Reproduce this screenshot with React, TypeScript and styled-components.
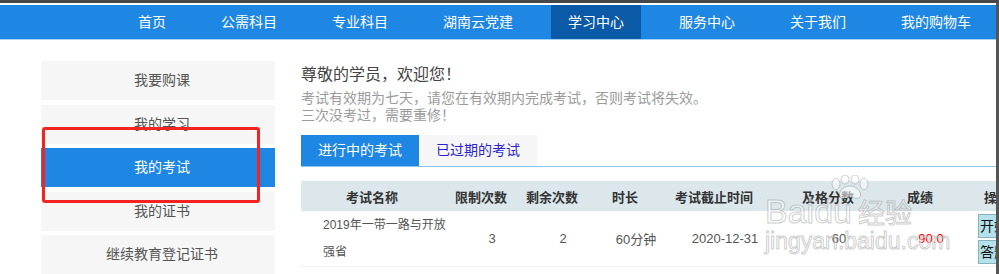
import styled, { createGlobalStyle } from "styled-components";

const GlobalStyle = createGlobalStyle`
  html, body {
    margin: 0;
    padding: 0;
    background: #fff;
  }
  body {
    font-family: "Liberation Sans", "Noto Sans CJK SC", sans-serif;
  }
  * {
    box-sizing: border-box;
  }
`;

const navItems = ["首页", "公需科目", "专业科目", "湖南云党建", "学习中心", "服务中心", "关于我们", "我的购物车"];
const menu = ["我要购课", "我的学习", "我的考试", "我的证书", "继续教育登记证书"];
const heads = ["考试名称", "限制次数", "剩余次数", "时长", "考试截止时间", "及格分数", "成绩", "操作"];

const App = () => {
  return (
    <Frame>
      <GlobalStyle />
      <Nav>
        {navItems.map((item) => (
          <NavItem key={item} active={item === "学习中心"}>
            {item}
          </NavItem>
        ))}
      </Nav>
      <Content>
        <Sidebar>
          {menu.map((item) => (
            <SideItem key={item} active={item === "我的考试"}>
              {item}
            </SideItem>
          ))}
        </Sidebar>
        <Main>
          <Title>尊敬的学员，欢迎您！</Title>
          <Notice>
            考试有效期为七天，请您在有效期内完成考试，否则考试将失效。
            <br />
            三次没考过，需要重修！
          </Notice>
          <Tabs>
            <Tab active>进行中的考试</Tab>
            <Tab>已过期的考试</Tab>
          </Tabs>
          <Table>
            <HeadRow>
              {heads.map((h) => (
                <Cell key={h}>{h}</Cell>
              ))}
            </HeadRow>
            <BodyRow>
              <NameCell>2019年一带一路与开放强省</NameCell>
              <Cell>3</Cell>
              <Cell>2</Cell>
              <Cell>60分钟</Cell>
              <Cell>2020-12-31</Cell>
              <Cell>60</Cell>
              <Cell>
                <Score>90.0</Score>
              </Cell>
              <Actions>
                <ActionButton>开始考试</ActionButton>
                <ActionButton>答题记录</ActionButton>
              </Actions>
            </BodyRow>
          </Table>
        </Main>
      </Content>
      <Highlight />
      <Watermark>
        <Paw viewBox="0 0 46 24">
          <ellipse cx="9" cy="9" rx="4" ry="5.5" />
          <ellipse cx="18" cy="4.5" rx="4" ry="4.5" />
          <ellipse cx="28" cy="4.5" rx="4" ry="4.5" />
          <ellipse cx="37" cy="9" rx="4" ry="5.5" />
          <path d="M23 11 C 15 11, 11 18, 13 22 C 15 25, 20 22, 23 22 C 26 22, 31 25, 33 22 C 35 18, 31 11, 23 11 Z" />
        </Paw>
        <MarkLine>
          <MarkBrand>Baidu</MarkBrand>
          <MarkCn>经验</MarkCn>
        </MarkLine>
        <MarkUrl>jingyan.baidu.com</MarkUrl>
      </Watermark>
    </Frame>
  );
};

const Frame = styled.div`
  position: relative;
  width: 999px;
  height: 274px;
  overflow: hidden;
  border-top: 3px solid #474747;
  border-right: 3px solid #555;
`;

const Nav = styled.nav`
  display: flex;
  gap: 21px;
  height: 35px;
  margin-top: 2px;
  padding-left: 121px;
  background: #1e87e4;
  border-bottom: 1px solid #a5d3f6;
`;

const NavItem = styled.div<{ active?: boolean }>`
  padding: 0 17px;
  height: 34px;
  line-height: 34px;
  font-size: 14px;
  color: #fff;
  white-space: nowrap;
  background: ${(p) => (p.active ? "#0b5aa7" : "transparent")};
`;

const Content = styled.div`
  display: flex;
  gap: 26px;
  padding: 21px 0 0 41px;
`;

const Sidebar = styled.div`
  display: flex;
  flex-direction: column;
  gap: 4.5px;
  width: 234px;
  flex-shrink: 0;
`;

const SideItem = styled.div<{ active?: boolean }>`
  height: 39px;
  line-height: 39px;
  padding-left: 8px;
  text-align: center;
  font-size: 14px;
  color: ${(p) => (p.active ? "#fff" : "#555")};
  background: ${(p) => (p.active ? "#1e87e4" : "#f6f6f6")};
`;

const Main = styled.div`
  flex: 1;
  padding-top: 3px;
  min-width: 0;
`;

const Title = styled.div`
  font-size: 16px;
  line-height: 22px;
  color: #444;
`;

const Notice = styled.div`
  margin-top: 4px;
  font-size: 14px;
  line-height: 17px;
  color: #9b9b9b;
`;

const Tabs = styled.div`
  display: flex;
  margin-top: 11px;
  border-bottom: 1px solid #8fc3ef;
`;

const Tab = styled.div<{ active?: boolean }>`
  width: 118px;
  height: 31px;
  line-height: 31px;
  text-align: center;
  font-size: 14px;
  color: ${(p) => (p.active ? "#fff" : "#2b1fd4")};
  background: ${(p) => (p.active ? "#1e87e4" : "#f6f6f6")};
`;

const Table = styled.div`
  margin-top: 14px;
  width: 900px;
`;

const columns = "142px 76px 66px 80px 98px 130px 54px 100px";

const HeadRow = styled.div`
  display: grid;
  grid-template-columns: ${columns};
  height: 30px;
  align-items: center;
  background: #dbe7eb;
  font-size: 13px;
  font-weight: bold;
  color: #333;
  text-align: center;
`;

const BodyRow = styled.div`
  display: grid;
  grid-template-columns: ${columns};
  height: 56px;
  padding-left: 11px;
  align-items: center;
  border-bottom: 1px solid #f0f0f0;
  font-size: 13px;
  color: #555;
  text-align: center;
`;

const Cell = styled.div`
  white-space: nowrap;
`;

const NameCell = styled.div`
  padding-left: 11px;
  text-align: left;
  font-size: 12px;
  line-height: 27px;
`;

const Score = styled.span`
  color: #f00;
`;

const Actions = styled.div`
  display: flex;
  flex-direction: column;
  align-items: center;
  gap: 2px;
`;

const ActionButton = styled.div`
  width: 60px;
  height: 24px;
  line-height: 22px;
  font-size: 14px;
  color: #111;
  white-space: nowrap;
  background: #b4e2ea;
  border: 1px solid #86b4bd;
`;

const Highlight = styled.div`
  position: absolute;
  left: 42px;
  top: 124px;
  width: 218px;
  height: 76px;
  border: 3px solid #f52222;
  border-radius: 3px;
`;

const Watermark = styled.div`
  position: absolute;
  left: 765px;
  top: 172px;
  width: 185px;
  color: rgba(255, 255, 255, 0.55);
  -webkit-text-stroke: 1px rgba(140, 140, 140, 0.45);
  pointer-events: none;
`;

const Paw = styled.svg`
  display: block;
  width: 46px;
  height: 24px;
  margin-left: 62px;
  fill: rgba(255, 255, 255, 0.55);
  stroke: rgba(140, 140, 140, 0.45);
  stroke-width: 1;
`;

const MarkLine = styled.div`
  display: flex;
  align-items: baseline;
  gap: 6px;
  margin-top: -4px;
`;

const MarkBrand = styled.span`
  font-family: "Liberation Sans", sans-serif;
  font-size: 34px;
  line-height: 32px;
`;

const MarkCn = styled.span`
  font-family: "Noto Sans CJK SC", sans-serif;
  font-size: 27px;
  line-height: 32px;
`;

const MarkUrl = styled.div`
  font-family: "Liberation Sans", sans-serif;
  font-size: 23px;
  line-height: 26px;
`;

export default App;
